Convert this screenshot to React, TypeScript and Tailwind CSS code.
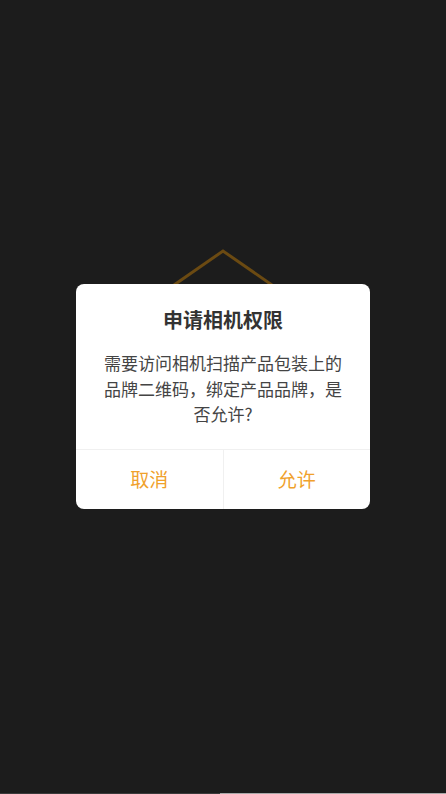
import React from "react";

const font = { fontFamily: '"Noto Sans CJK SC", "Noto Sans", sans-serif' };

export default function App() {
  return (
    <div className="relative w-[446px] h-[794px] overflow-hidden bg-[#1c1c1c] flex flex-col" style={font}>
      {/* scanner frame behind the mask */}
      <div className="flex-1 flex flex-col items-center pt-[247px]">
        <svg width="104" height="60" viewBox="0 0 104 60" fill="none" className="-ml-px">
          <polyline points="3,38 52,4 101,38 101,60" stroke="#6b4a12" strokeWidth="3" strokeLinejoin="miter" />
          <line x1="3" y1="38" x2="3" y2="60" stroke="#6b4a12" strokeWidth="3" />
        </svg>
      </div>
      <div className="flex h-px">
        <div className="w-[220px] bg-[#3a3a3a]" />
        <div className="flex-1 bg-[#a8a8a8]" />
      </div>

      {/* permission dialog */}
      <div className="absolute left-[76px] top-[284px] w-[294px] bg-white rounded-lg overflow-hidden">
        <div className="px-6 pt-[22px] pb-[22px] flex flex-col items-center gap-4">
          <h2 className="text-[20px] leading-7 font-bold text-[#333333]">申请相机权限</h2>
          <p className="text-[17px] leading-[25.5px] text-[#444444] text-center">
            需要访问相机扫描产品包装上的品牌二维码，绑定产品品牌，是否允许?
          </p>
        </div>
        <div className="flex h-[60px] border-t border-[#f0f0f0]">
          <button className="flex-1 flex items-center justify-center text-[19px] text-[#f0a12c] border-r border-[#f0f0f0]">
            取消
          </button>
          <button className="flex-1 flex items-center justify-center text-[19px] text-[#f0a12c]">
            允许
          </button>
        </div>
      </div>
    </div>
  );
}
